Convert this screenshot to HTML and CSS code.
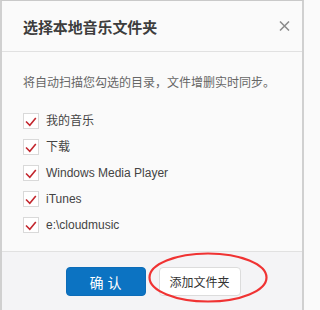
FILE: index.html
```html
<!DOCTYPE html>
<html lang="zh-CN">
<head>
<meta charset="utf-8">
<title>选择本地音乐文件夹</title>
<link rel="stylesheet" href="styles.css">
</head>
<body>
<div class="dialog">
  <div class="header">
    <h1 class="title">选择本地音乐文件夹</h1>
    <svg class="close" width="11" height="10" viewBox="0 0 11 10"><path d="M1 0.5 L10 9.5 M10 0.5 L1 9.5" stroke="#8a8a8a" stroke-width="1.5" fill="none"/></svg>
  </div>
  <div class="content">
    <p class="desc">将自动扫描您勾选的目录，文件增删实时同步。</p>
    <ul class="list">
      <li class="item"><span class="box"><svg width="16" height="16" viewBox="0 0 16 16"><path d="M3 8.5 L6.8 12.2 L12.8 5" stroke="#c3272e" stroke-width="1.6" fill="none"/></svg></span><span class="label">我的音乐</span></li>
      <li class="item"><span class="box"><svg width="16" height="16" viewBox="0 0 16 16"><path d="M3 8.5 L6.8 12.2 L12.8 5" stroke="#c3272e" stroke-width="1.6" fill="none"/></svg></span><span class="label">下载</span></li>
      <li class="item"><span class="box"><svg width="16" height="16" viewBox="0 0 16 16"><path d="M3 8.5 L6.8 12.2 L12.8 5" stroke="#c3272e" stroke-width="1.6" fill="none"/></svg></span><span class="label">Windows Media Player</span></li>
      <li class="item"><span class="box"><svg width="16" height="16" viewBox="0 0 16 16"><path d="M3 8.5 L6.8 12.2 L12.8 5" stroke="#c3272e" stroke-width="1.6" fill="none"/></svg></span><span class="label">iTunes</span></li>
      <li class="item"><span class="box"><svg width="16" height="16" viewBox="0 0 16 16"><path d="M3 8.5 L6.8 12.2 L12.8 5" stroke="#c3272e" stroke-width="1.6" fill="none"/></svg></span><span class="label">e:\cloudmusic</span></li>
    </ul>
  </div>
  <div class="footer">
    <button class="btn btn-primary">确 认</button>
    <button class="btn btn-default">添加文件夹</button>
  </div>
  <svg class="annotation" width="120" height="51" viewBox="0 0 120 51"><ellipse cx="60" cy="25.5" rx="58.5" ry="24" stroke="#f03333" stroke-width="2.2" fill="none"/></svg>
</div>
</body>
</html>
```

FILE: styles.css
```css
html, body {
  margin: 0;
  padding: 0;
  background: #fafafa;
}

body {
  font-family: "Liberation Sans", "Noto Sans CJK SC", sans-serif;
  font-size: 12px;
  color: #444;
}

.dialog {
  position: relative;
  width: 304px;
  height: 310px;
  box-sizing: border-box;
  border-top: 1px solid #c9c9c9;
  border-left: 2px solid #d0d0d0;
  border-right: 2px solid #d0d0d0;
  background: #fafafa;
  display: flex;
  flex-direction: column;
}

.header {
  height: 51px;
  flex: none;
  box-sizing: border-box;
  border-bottom: 1px solid #e1e1e1;
  display: flex;
  align-items: center;
  justify-content: space-between;
  padding: 3px 12px 0 21px;
}

.title {
  margin: 0;
  font-size: 15px;
  font-weight: bold;
  line-height: 20px;
  color: #3d3d3d;
  letter-spacing: -0.1px;
}

.close {
  display: block;
  margin-top: -3px;
}

.content {
  flex: 1;
  padding: 21px 0 0 21px;
}

.desc {
  margin: 0;
  line-height: 20px;
  font-size: 12px;
  color: #666;
}

.list {
  list-style: none;
  margin: 15px 0 0 0;
  padding: 0;
}

.item {
  height: 26px;
  display: flex;
  align-items: center;
}

.box {
  width: 16px;
  height: 16px;
  box-sizing: border-box;
  border: 1px solid #d9d9d9;
  background: #fff;
  position: relative;
  flex: none;
}

.box svg {
  position: absolute;
  left: -1px;
  top: -1px;
}

.label {
  margin-left: 7px;
  line-height: 18px;
  color: #444;
  font-size: 12px;
}

.footer {
  height: 59px;
  flex: none;
  box-sizing: border-box;
  border-top: 1px solid #e1e1e1;
  background: #f4f4f6;
  display: flex;
  justify-content: center;
  align-items: flex-start;
  gap: 13px;
  padding: 15px 0 0 2px;
}

.btn {
  height: 29px;
  box-sizing: border-box;
  border-radius: 4px;
  font-family: "Liberation Sans", "Noto Sans CJK SC", sans-serif;
  padding: 0;
  margin: 0;
  cursor: pointer;
}

.btn-primary {
  width: 80px;
  background: #0c73c2;
  border: 1px solid #0c6cb8;
  color: #fff;
  font-size: 14px;
}

.btn-default {
  width: 82px;
  background: #fff;
  border: 1px solid #dcdcdc;
  color: #333;
  font-size: 12px;
}

.annotation {
  position: absolute;
  left: 146px;
  top: 251px;
}
```
